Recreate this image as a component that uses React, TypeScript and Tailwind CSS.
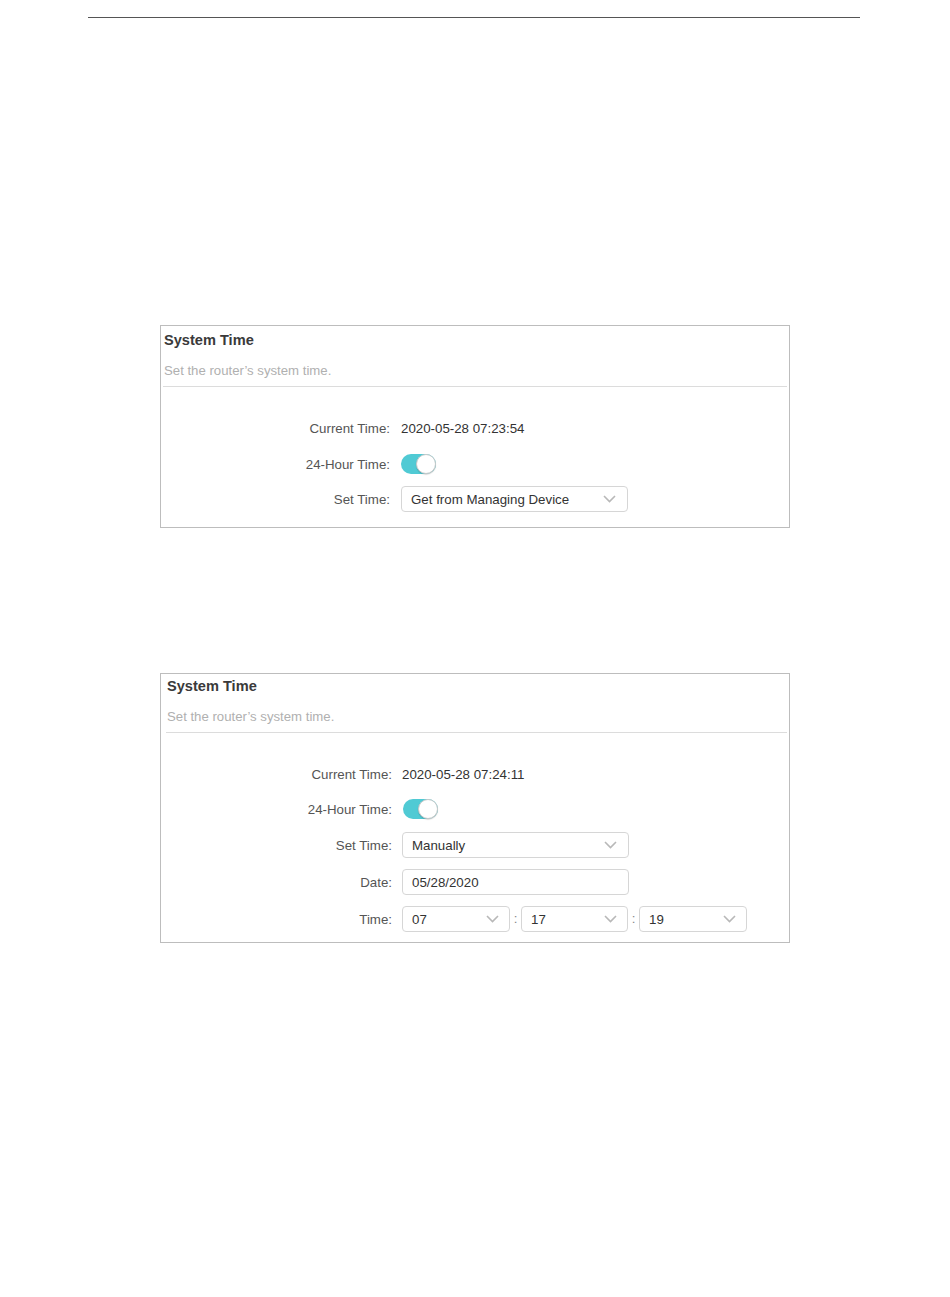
import React from "react";

const Chevron = () => (
  <svg width="13" height="8" viewBox="0 0 13 8" fill="none" className="shrink-0">
    <polyline points="1,1 6.5,6.5 12,1" stroke="#b8b8b8" strokeWidth="1.6" fill="none" />
  </svg>
);

const Select = ({ value, w, chevR }: { value: string; w: string; chevR: string }) => (
  <div className={`${w} h-[26px] border border-[#d6d6d6] rounded-[4px] flex items-center justify-between pl-[9px] ${chevR} bg-white`}>
    <span className="text-[13.3px] text-[#333] pt-px">{value}</span>
    <Chevron />
  </div>
);

const Toggle = () => (
  <div className="relative w-[35px] h-[20px] rounded-full bg-[#50cad4]">
    <div className="absolute right-0 top-0 w-[20px] h-[20px] rounded-full bg-white border border-[#c9c9c9] shadow-[0_1px_1px_rgba(0,0,0,0.15)]" />
  </div>
);

const Row = ({ label, lw, gap, mt, children }: { label: string; lw: string; gap: string; mt: string; children: React.ReactNode }) => (
  <div className={`flex items-center h-[26px] ${mt}`}>
    <div className={`${lw} text-right text-[13.3px] text-[#555] shrink-0 pt-px`}>{label}</div>
    <div className={`${gap} flex items-center`}>{children}</div>
  </div>
);

export default function App() {
  return (
    <div className="min-h-[1297px] bg-white" style={{ fontFamily: '"Liberation Sans", Arial, sans-serif' }}>
      <div className="pt-[17px] pl-[88px]">
        <div className="w-[772px] h-px bg-[#555]" />
      </div>

      {/* Panel 1 */}
      <div className="ml-[160px] mt-[307px] w-[630px] border border-[#bdbdbd] pt-[4px] pb-[15px]">
        <div className="pl-[3px]">
          <div className="h-[20px] leading-[20px] text-[14.6px] font-bold text-[#3a3a3a]">System Time</div>
          <div className="mt-[12px] h-[18px] leading-[18px] text-[13.2px] text-[#b0b0b0]">Set the router’s system time.</div>
        </div>
        <div className="mt-[6px] mx-[2px] h-px bg-[#dcdcdc]" />
        <Row label="Current Time:" lw="w-[229px]" gap="ml-[11px]" mt="mt-[28px]">
          <span className="text-[13.3px] text-[#333] pt-px">2020-05-28 07:23:54</span>
        </Row>
        <Row label="24-Hour Time:" lw="w-[229px]" gap="ml-[11px]" mt="mt-[10px]">
          <Toggle />
        </Row>
        <Row label="Set Time:" lw="w-[229px]" gap="ml-[11px]" mt="mt-[9px]">
          <Select value="Get from Managing Device" w="w-[227px]" chevR="pr-[11px]" />
        </Row>
      </div>

      {/* Panel 2 */}
      <div className="ml-[160px] mt-[145px] w-[630px] border border-[#bdbdbd] pt-[2px] pb-[10px]">
        <div className="pl-[6px]">
          <div className="h-[20px] leading-[20px] text-[14.6px] font-bold text-[#3a3a3a]">System Time</div>
          <div className="mt-[12px] h-[18px] leading-[18px] text-[13.2px] text-[#b0b0b0]">Set the router’s system time.</div>
        </div>
        <div className="mt-[6px] ml-[5px] mr-[2px] h-px bg-[#dcdcdc]" />
        <Row label="Current Time:" lw="w-[231px]" gap="ml-[10px]" mt="mt-[28px]">
          <span className="text-[13.3px] text-[#333] pt-px">2020-05-28 07:24:11</span>
        </Row>
        <Row label="24-Hour Time:" lw="w-[231px]" gap="ml-[11px]" mt="mt-[9px]">
          <Toggle />
        </Row>
        <Row label="Set Time:" lw="w-[231px]" gap="ml-[10px]" mt="mt-[10px]">
          <Select value="Manually" w="w-[227px]" chevR="pr-[11px]" />
        </Row>
        <Row label="Date:" lw="w-[231px]" gap="ml-[10px]" mt="mt-[11px]">
          <div className="w-[227px] h-[26px] border border-[#d6d6d6] rounded-[4px] flex items-center pl-[9px]">
            <span className="text-[13.3px] text-[#333] pt-px">05/28/2020</span>
          </div>
        </Row>
        <Row label="Time:" lw="w-[231px]" gap="ml-[10px]" mt="mt-[11px]">
          <Select value="07" w="w-[108px]" chevR="pr-[10px]" />
          <span className="w-[11px] text-center text-[13.3px] text-[#888]">:</span>
          <Select value="17" w="w-[107px]" chevR="pr-[10px]" />
          <span className="w-[11px] text-center text-[13.3px] text-[#888]">:</span>
          <Select value="19" w="w-[108px]" chevR="pr-[10px]" />
        </Row>
      </div>
    </div>
  );
}
